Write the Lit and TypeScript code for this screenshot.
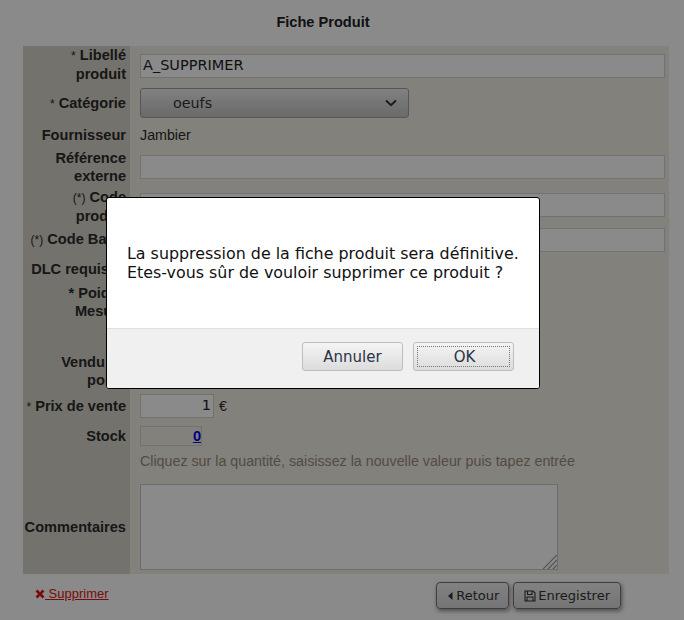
import { LitElement, html, css } from "lit";
import { customElement } from "lit/decorators.js";

@customElement("app-root")
export class AppRoot extends LitElement {
  static styles = css`
    :host { display: block; width: 684px; height: 620px; position: relative; overflow: hidden; background: #fff; font-family: "Liberation Sans", Arial, sans-serif; font-size: 14.25px; color: #2b2b2b; }
    .title { width: 646px; height: 46px; display: flex; align-items: center; justify-content: center; padding-bottom: 3px; box-sizing: border-box; font-weight: bold; font-size: 14.6px; color: #222; }
    .form { margin-left: 23px; width: 646px; background: #f1eee4; }
    .row { display: grid; grid-template-columns: 107px 1fr; }
    .label { background: #d6d3c8; box-sizing: border-box; padding-right: 4px; display: flex; align-items: center; justify-content: flex-end; text-align: right; font-weight: bold; font-size: 14.6px; line-height: 18px; white-space: nowrap; }
    .line { display: block; }
    .star { font-weight: normal; font-size: 12px; }
    .value { box-sizing: border-box; padding-left: 10px; padding-right: 4px; display: flex; align-items: center; min-width: 0; }
    .low .label { padding-top: 3px; }
    .down .label { padding-top: 2px; }
    .up .label { padding-bottom: 2px; }
    .top .value { align-items: flex-start; }
    .h38 { height: 38px; } .h37 { height: 37px; } .h27 { height: 27px; } .h39 { height: 39px; } .h31 { height: 31px; }
    .h28 { height: 28px; } .h29 { height: 29px; } .h41 { height: 41px; } .h95 { height: 95px; }
    .input { box-sizing: border-box; width: 100%; height: 24px; background: #fff; border: 1px solid #d4d2cc; font: 14.5px "DejaVu Sans", sans-serif; color: #222; padding: 0 2px 1px; display: flex; align-items: center; }
    .select { box-sizing: border-box; width: 269px; height: 30px; border: 1px solid #a0a0a0; border-radius: 3px; background: linear-gradient(#eeeeee, #c4c4c4); font: 14.3px "DejaVu Sans", sans-serif; color: #333; display: flex; align-items: center; justify-content: space-between; padding: 0 11px 0 32px; }
    .price { width: 74px; justify-content: flex-end; }
    .euro { margin-left: 5px; }
    .stock { box-sizing: border-box; width: 62px; height: 20px; border: 1px solid #d4d2cc; display: flex; align-items: center; justify-content: flex-end; font-weight: bold; font-size: 14.6px; }
    .stock a { color: #0000ee; text-decoration: underline; }
    .hint { color: #9a8c7c; line-height: 20px; white-space: nowrap; }
    .area { box-sizing: border-box; width: 418px; height: 86px; background: #fff; border: 1px solid #c8c8c8; position: relative; }
    .grip { position: absolute; right: 0; bottom: 0; display: block; }
    .footer { display: flex; align-items: flex-start; padding: 8px 63px 0 35px; justify-content: space-between; }
    .del { color: #e01515; text-decoration: underline; font-size: 13px; margin-top: 4px; display: flex; align-items: center; }
    .actions { display: flex; gap: 4px; }
    .btn { box-sizing: border-box; height: 27px; border: 1px solid #757575; border-radius: 4px; background: linear-gradient(#f0f0f0, #d8d8d8); box-shadow: 1px 2px 4px rgba(0,0,0,.45); font: 13px "DejaVu Sans", sans-serif; color: #333; display: flex; align-items: center; gap: 3px; padding: 0 9px 0 11px; }
    .save { gap: 2px; padding: 0 10px; }
    .overlay { position: absolute; inset: 0; background: rgba(0,0,0,.46); }
    .modal { position: absolute; left: 106px; top: 197px; width: 434px; height: 192px; box-sizing: border-box; border: 1px solid #000; border-radius: 3px; background: #fff; display: flex; flex-direction: column; overflow: hidden; }
    .msg { flex: 1; box-sizing: border-box; padding: 46px 20px 0; font: 15.88px/19px "DejaVu Sans", sans-serif; color: #111; white-space: nowrap; }
    .mfoot { height: 60px; box-sizing: border-box; background: #f0f0f0; border-top: 1px solid #e0e0e0; display: flex; justify-content: flex-end; gap: 10px; padding: 13px 25px 0 0; }
    .mbtn { box-sizing: border-box; width: 101px; height: 29px; border: 1px solid #bdbdbd; border-radius: 3px; background: linear-gradient(#f4f4f4, #dcdcdc); font: 15px "DejaVu Sans", sans-serif; color: #2b3344; display: flex; align-items: center; justify-content: center; }
    .ok { padding: 3px; }
    .ok span { flex: 1; height: 100%; border: 1px dotted #777; box-sizing: border-box; display: flex; align-items: center; justify-content: center; padding-left: 2px; }
  `;

  private row(h: string, label: unknown, value: unknown) {
    return html`<div class="row ${h}"><div class="label"><div>${label}</div></div><div class="value">${value}</div></div>`;
  }

  render() {
    return html`
      <div class="title">Fiche Produit</div>
      <div class="form">
        ${this.row("h38 up", html`<span class="line"><span class="star">*</span> Libellé</span><span class="line">produit</span>`, html`<div class="input">A_SUPPRIMER</div>`)}
        ${this.row("h37 down", html`<span class="star">*</span> Catégorie`, html`<div class="select">oeufs<svg width="12" height="8" viewBox="0 0 12 8"><path d="M1 1.5 6 6.2 11 1.5" fill="none" stroke="#333" stroke-width="2"/></svg></div>`)}
        ${this.row("h27", "Fournisseur", "Jambier")}
        ${this.row("h37", html`<span class="line">Référence</span><span class="line">externe</span>`, html`<div class="input"></div>`)}
        ${this.row("h39 low", html`<span class="line"><span class="star">(*)</span> Code</span><span class="line">produit</span>`, html`<div class="input"></div>`)}
        ${this.row("h31", html`<span class="star">(*)</span> Code Barre`, html`<div class="input"></div>`)}
        ${this.row("h28", "DLC requise?", "")}
        ${this.row("h38", html`<span class="line">* Poids /</span><span class="line">Mesure</span>`, "")}
        ${this.row("h29", "", "")}
        ${this.row("h41", html`<span class="line">Vendu au</span><span class="line">poids</span>`, "")}
        ${this.row("h29 down", html`<span class="star">*</span> Prix de vente`, html`<div class="input price">1</div><span class="euro">€</span>`)}
        ${this.row("h31", "Stock", html`<div class="stock"><a>0</a></div>`)}
        ${this.row("h28 top", "", html`<div class="hint">Cliquez sur la quantité, saisissez la nouvelle valeur puis tapez entrée</div>`)}
        ${this.row("h95", "Commentaires", html`<div class="area"><svg class="grip" width="14" height="14" viewBox="0 0 14 14"><path d="M0 14 14 0M5 14 14 5M10 14 14 10" stroke="#999" stroke-width="1.2" fill="none"/></svg></div>`)}
      </div>
      <div class="footer">
        <div class="del"><svg width="10" height="10" viewBox="0 0 10 10"><path d="M1.5 1.5 8.5 8.5M8.5 1.5 1.5 8.5" stroke="#e01515" stroke-width="2.6" fill="none"/></svg><span>&nbsp;Supprimer</span></div>
        <div class="actions">
          <div class="btn"><svg width="5" height="8" viewBox="0 0 5 8"><path d="M4.5 0V8L0 4Z" fill="#333"/></svg>Retour</div>
          <div class="btn save"><svg width="12" height="12" viewBox="0 0 12 12"><path d="M1 1H9L11 3V11H1ZM3.5 1.5V4.5H8V1.5M3 11V7H9V11" fill="none" stroke="#333" stroke-width="1.1"/></svg>Enregistrer</div>
        </div>
      </div>
      <div class="overlay"></div>
      <div class="modal">
        <div class="msg">La suppression de la fiche produit sera définitive.<br>Etes-vous sûr de vouloir supprimer ce produit ?</div>
        <div class="mfoot">
          <div class="mbtn">Annuler</div>
          <div class="mbtn ok"><span>OK</span></div>
        </div>
      </div>
    `;
  }
}
